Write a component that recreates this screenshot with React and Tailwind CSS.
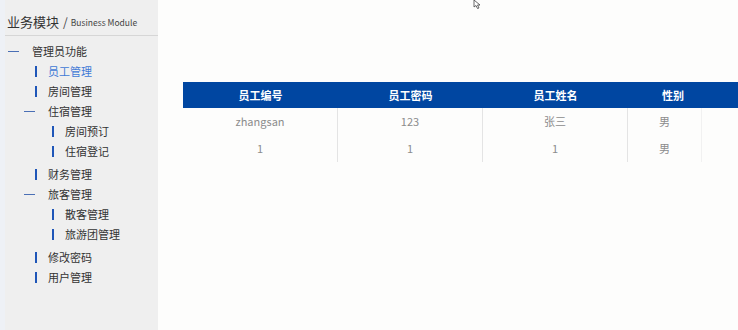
import React from 'react';

const font = { fontFamily: "'Noto Sans CJK SC', 'Noto Sans', sans-serif" };

const menu = [
  { type: 'group', level: 0, label: '管理员功能' },
  { type: 'item', level: 1, label: '员工管理', active: true },
  { type: 'item', level: 1, label: '房间管理' },
  { type: 'group', level: 1, label: '住宿管理' },
  { type: 'item', level: 2, label: '房间预订' },
  { type: 'item', level: 2, label: '住宿登记' },
  { type: 'item', level: 1, label: '财务管理', gap: true },
  { type: 'group', level: 1, label: '旅客管理' },
  { type: 'item', level: 2, label: '散客管理' },
  { type: 'item', level: 2, label: '旅游团管理' },
  { type: 'item', level: 1, label: '修改密码', gap: true },
  { type: 'item', level: 1, label: '用户管理' },
];

const rows = [
  ['zhangsan', '123', '张三', '男'],
  ['1', '1', '1', '男'],
];

const MenuRow = ({ m }) => {
  if (m.type === 'group') {
    return (
      <div className={`flex items-center h-[20px] ${m.level === 0 ? 'pl-[8px]' : 'pl-[24px]'}`}>
        <span className="w-[11px] h-px bg-[#4a6fb5]" />
        <span className="ml-[13px] text-[11px] text-[#333]">{m.label}</span>
      </div>
    );
  }
  return (
    <div className={`flex items-center h-[20px] ${m.level === 1 ? 'pl-[35px]' : 'pl-[52px]'} ${m.gap ? 'mt-[3px]' : ''}`}>
      <span className="w-[2px] h-[11px] bg-[#1f56b8]" />
      <span className={`ml-[11px] text-[11px] ${m.active ? 'text-[#3f7ad6]' : 'text-[#333]'}`}>{m.label}</span>
    </div>
  );
};

const App = () => {
  return (
    <div className="relative w-[738px] h-[330px] flex bg-[#fdfdfc] overflow-hidden" style={font}>
      {/* 左侧菜单 */}
      <aside className="w-[158px] h-full bg-[#efefef] shrink-0 flex flex-col border-l-[5px] border-[#eef1f6]">
        <div className="h-[36px] border-b border-[#d6d6d6] flex items-center pl-[2px] pt-[9px]">
          <span className="text-[13px] text-[#333]">业务模块</span>
          <span className="text-[12px] text-[#444] ml-[4px]">/</span>
          <span className="text-[8.5px] text-[#444] ml-[3px]">Business Module</span>
        </div>
        <div className="flex flex-col pt-[5px] -ml-[5px]">
          {menu.map((m, i) => (
            <MenuRow key={i} m={m} />
          ))}
        </div>
      </aside>

      {/* 内容区 */}
      <main className="flex-1 pt-[82px] pl-[25px]">
        <div className="flex h-[26px] bg-[#0046a1] text-white text-[11px] font-bold items-center">
          <div className="w-[155px] text-center">员工编号</div>
          <div className="w-[145px] text-center">员工密码</div>
          <div className="w-[145px] text-center">员工姓名</div>
          <div className="w-[90px] text-center">性别</div>
          <div className="flex-1" />
        </div>
        {rows.map((r, i) => (
          <div key={i} className="flex h-[27px] items-center text-[11px] text-[#8c8c8c]">
            <div className="w-[155px] h-full flex items-center justify-center border-r border-[#e4e4e4]">{r[0]}</div>
            <div className="w-[145px] h-full flex items-center justify-center border-r border-[#e4e4e4]">{r[1]}</div>
            <div className="w-[145px] h-full flex items-center justify-center border-r border-[#e4e4e4]">{r[2]}</div>
            <div className="w-[74px] h-full flex items-center justify-center border-r border-[#f1f1f1]">{r[3]}</div>
            <div className="flex-1" />
          </div>
        ))}
      </main>

      {/* 鼠标指针 */}
      <svg className="absolute left-[473px] top-0" width="10" height="9" viewBox="0 0 10 9">
        <path d="M1 0 L1 7 L3 5.5 L4.5 8.5 L6 8 L4.5 5 L7 5 Z" fill="#fff" stroke="#444" strokeWidth="0.8" />
      </svg>
    </div>
  );
};

export default App;
